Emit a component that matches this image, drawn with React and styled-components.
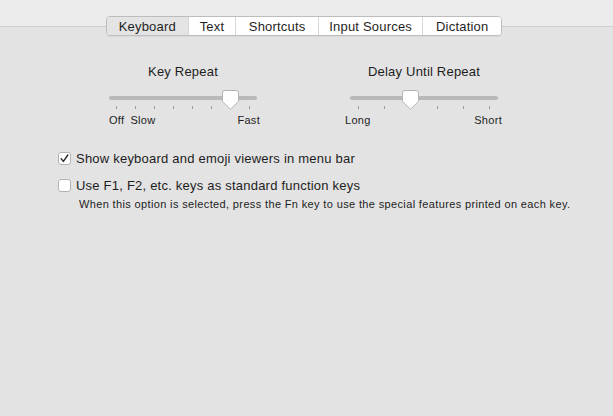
import React from "react";
import styled, { createGlobalStyle } from "styled-components";

const Global = createGlobalStyle`
  html, body { margin: 0; padding: 0; background: #e3e3e3; }
  body { font-family: "Liberation Sans", Arial, sans-serif; color: #1d1d1d; }
`;

const Window = styled.div`
  width: 613px;
  height: 416px;
  background: #e3e3e3;
  overflow: hidden;
`;

const HeaderBand = styled.div`
  height: 26px;
  background: #ececec;
  border-bottom: 1px solid #cdcdcd;
`;

const TabBar = styled.div`
  display: flex;
  margin: -11px 0 0 106px;
  width: 396px;
  height: 20px;
  box-sizing: border-box;
  border: 1px solid #bdbdbd;
  border-radius: 4px;
  background: #ffffff;
  overflow: hidden;
  box-shadow: 0 1px 0 rgba(0,0,0,0.04);
`;

const Tab = styled.div`
  width: ${(p) => p.$w}px;
  display: flex;
  align-items: center;
  justify-content: center;
  font-size: 13px;
  letter-spacing: 0.2px;
  color: #1f1f1f;
  background: ${(p) => (p.$active ? "#e4e4e4" : "#ffffff")};
  border-left: ${(p) => (p.$first ? "none" : "1px solid #d6d6d6")};
  box-sizing: border-box;
`;

const SliderRow = styled.div`
  display: flex;
  gap: 93px;
  margin: 28px 0 0 109px;
`;

const SliderCol = styled.div`
  width: 148px;
  display: flex;
  flex-direction: column;
`;

const SliderTitle = styled.div`
  font-size: 13px;
  line-height: 16px;
  letter-spacing: 0.2px;
  text-align: center;
  color: #1d1d1d;
`;

const SliderBox = styled.div`
  position: relative;
  height: 24px;
  margin-top: 9px;
`;

const Track = styled.div`
  margin-top: 7px;
  height: 4px;
  border-radius: 2px;
  background: #b9b9b9;
`;

const TickRow = styled.div`
  display: flex;
  justify-content: space-between;
  margin-top: 6px;
  padding: 0 ${(p) => p.$inset}px;
`;

const Tick = styled.div`
  width: 1px;
  height: 3px;
  background: #9a9a9a;
`;

const Thumb = styled.svg`
  position: absolute;
  top: 1px;
  width: 17px;
  height: 20px;
  margin-left: -8.5px;
`;

const Labels = styled.div`
  display: flex;
  margin-top: 1px;
  font-size: 11px;
  line-height: 13px;
  letter-spacing: 0.3px;
  color: #1d1d1d;
`;

const Label = styled.span`
  margin-left: ${(p) => p.$ml || 0}px;
  ${(p) => (p.$push ? "margin-left: auto;" : "")}
  margin-right: ${(p) => p.$mr || 0}px;
`;

const Options = styled.div`
  margin: 23px 0 0 58px;
  display: flex;
  flex-direction: column;
`;

const CheckRow = styled.div`
  display: flex;
  align-items: center;
  gap: 5px;
  height: 16px;
  margin-top: ${(p) => p.$mt || 0}px;
  font-size: 13px;
  letter-spacing: 0.22px;
`;

const Box = styled.div`
  width: 13px;
  height: 13px;
  box-sizing: border-box;
  border: 1px solid #b3b3b3;
  border-radius: 3px;
  background: #ffffff;
  display: flex;
  align-items: center;
  justify-content: center;
`;

const Desc = styled.div`
  margin: 4px 0 0 21px;
  font-size: 11px;
  line-height: 14px;
  letter-spacing: 0.36px;
  color: #1d1d1d;
`;

const ThumbShape = ({ left }) => (
  <Thumb style={{ left }} viewBox="0 0 17 20">
    <path
      d="M3 0.5 H14 Q16.5 0.5 16.5 3 V11.5 L8.5 19.2 L0.5 11.5 V3 Q0.5 0.5 3 0.5 Z"
      fill="#ffffff"
      stroke="#b4b4b4"
      strokeWidth="1"
    />
  </Thumb>
);

const Slider = ({ title, ticks, inset, pos, labels }) => {
  const usable = 148 - inset * 2 - 1;
  const left = inset + 0.5 + usable * pos;
  return (
    <SliderCol>
      <SliderTitle>{title}</SliderTitle>
      <SliderBox>
        <Track />
        <TickRow $inset={inset}>
          {Array.from({ length: ticks }).map((_, i) => (
            <Tick key={i} />
          ))}
        </TickRow>
        <ThumbShape left={left} />
      </SliderBox>
      <Labels>{labels}</Labels>
    </SliderCol>
  );
};

export default function App() {
  const tabs = [
    ["Keyboard", 81],
    ["Text", 48],
    ["Shortcuts", 83],
    ["Input Sources", 105],
    ["Dictation", 79],
  ];
  return (
    <Window>
      <Global />
      <HeaderBand />
      <TabBar>
        {tabs.map(([t, w], i) => (
          <Tab key={t} $w={w} $active={i === 0} $first={i === 0}>
            {t}
          </Tab>
        ))}
      </TabBar>
      <SliderRow>
        <Slider
          title="Key Repeat"
          ticks={8}
          inset={7}
          pos={6 / 7}
          labels={
            <>
              <Label>Off</Label>
              <Label $ml={6}>Slow</Label>
              <Label $push $mr={-3}>Fast</Label>
            </>
          }
        />
        <Slider
          title="Delay Until Repeat"
          ticks={6}
          inset={8}
          pos={2 / 5}
          labels={
            <>
              <Label $ml={-5}>Long</Label>
              <Label $push $mr={-4}>Short</Label>
            </>
          }
        />
      </SliderRow>
      <Options>
        <CheckRow>
          <Box>
            <svg width="9" height="9" viewBox="0 0 9 9">
              <path d="M1.2 4.8 L3.4 7.4 L7.8 1" fill="none" stroke="#2a2a2a" strokeWidth="1.4" strokeLinecap="round" strokeLinejoin="round" />
            </svg>
          </Box>
          <span>Show keyboard and emoji viewers in menu bar</span>
        </CheckRow>
        <CheckRow $mt={11}>
          <Box />
          <span>Use F1, F2, etc. keys as standard function keys</span>
        </CheckRow>
        <Desc>When this option is selected, press the Fn key to use the special features printed on each key.</Desc>
      </Options>
    </Window>
  );
}
